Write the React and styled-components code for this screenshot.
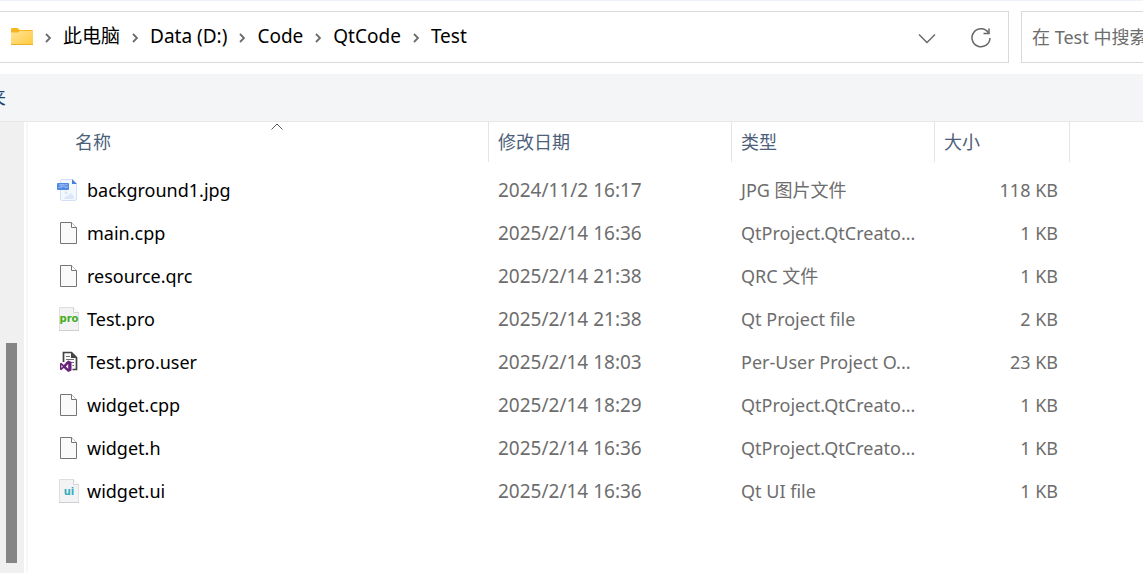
import React from 'react'
import styled, { createGlobalStyle } from 'styled-components'

const crumbs = ['此电脑', 'Data (D:)', 'Code', 'QtCode', 'Test']

const files = [
  { name: 'background1.jpg', date: '2024/11/2 16:17', type: 'JPG 图片文件', size: '118 KB', icon: 'jpg' },
  { name: 'main.cpp', date: '2025/2/14 16:36', type: 'QtProject.QtCreato...', size: '1 KB', icon: 'blank' },
  { name: 'resource.qrc', date: '2025/2/14 21:38', type: 'QRC 文件', size: '1 KB', icon: 'blank' },
  { name: 'Test.pro', date: '2025/2/14 21:38', type: 'Qt Project file', size: '2 KB', icon: 'pro' },
  { name: 'Test.pro.user', date: '2025/2/14 18:03', type: 'Per-User Project O...', size: '23 KB', icon: 'vs' },
  { name: 'widget.cpp', date: '2025/2/14 18:29', type: 'QtProject.QtCreato...', size: '1 KB', icon: 'blank' },
  { name: 'widget.h', date: '2025/2/14 16:36', type: 'QtProject.QtCreato...', size: '1 KB', icon: 'blank' },
  { name: 'widget.ui', date: '2025/2/14 16:36', type: 'Qt UI file', size: '1 KB', icon: 'ui' },
]

const columns = [
  { id: 'name', title: '名称', width: 461 },
  { id: 'date', title: '修改日期', width: 243 },
  { id: 'type', title: '类型', width: 203 },
  { id: 'size', title: '大小', width: 135 },
]

function FolderIcon() {
  return (
    <svg width="22" height="18" viewBox="0 0 22 18" aria-hidden="true">
      <defs>
        <linearGradient id="folder" x1="0" y1="0" x2="1" y2="1">
          <stop offset="0" stopColor="#ffe49a" />
          <stop offset="1" stopColor="#ffca3a" />
        </linearGradient>
      </defs>
      <path d="M0 1.2Q0 0 1.2 0H6.5L8.5 2H21Q22 2 22 3V8H0Z" fill="#f6b51e" />
      <path d="M0 4.6H7L9 3H22V17H0Z" fill="url(#folder)" />
      <path d="M0 16H22V16.5Q22 17 21 17H1Q0 17 0 16.5Z" fill="#eab02c" />
    </svg>
  )
}

function CrumbArrow() {
  return (
    <svg width="6" height="10" viewBox="0 0 6 10" aria-hidden="true">
      <path d="M1 1L5 5L1 9" fill="none" stroke="#6b6b6b" strokeWidth="1.8" />
    </svg>
  )
}

function FileIcon({ kind }) {
  if (kind === 'jpg') {
    return (
      <svg width="24" height="24" viewBox="0 0 24 24" aria-hidden="true">
        <path d="M6 1.5H16L20.5 6V21Q20.5 22.5 19 22.5H6Q4.5 22.5 4.5 21V3Q4.5 1.5 6 1.5Z" fill="#f3f7fe" stroke="#d3e0f8" />
        <path d="M16 1L21 6H16Z" fill="#4a80dc" />
        <circle cx="10" cy="14.5" r="1.5" fill="#dbe6fa" />
        <path d="M8 21Q10 17 12 18Q14 14 16 16Q18 18 18 21Z" fill="#dbe6fa" />
        <rect x="1" y="5" width="12" height="7" rx="1" fill="#5088e4" />
        <text x="7" y="10" textAnchor="middle" fontFamily="Liberation Sans, sans-serif" fontSize="5" fontWeight="700" fill="#a5c2f5">JPG</text>
      </svg>
    )
  }
  if (kind === 'vs') {
    return (
      <svg width="24" height="24" viewBox="0 0 24 24" aria-hidden="true">
        <path d="M7 2.5H15.5L20.5 7.5V19.5H7Z" fill="#fafafa" />
        <path d="M7.5 12V2.5H15.5L20.5 7.5V19.5H16.5" fill="none" stroke="#424242" strokeWidth="1.7" />
        <path d="M15 2.5V8H20.5Z" fill="#424242" />
        <path d="M10 6.5H14M10 9.5H18M10 12.5H18M16.5 15.5H18" stroke="#707070" />
        <path
          d="M12.2 10.5L15.5 12V20.5L12.2 22L7.8 17.9L5.2 20.2L4 19.6V13.4L5.2 12.8L7.8 15L12.2 10.5ZM12.2 14L9.8 16.5L12.2 18.8ZM5.4 15V18L6.8 16.5Z"
          fill="#68217a"
          fillRule="evenodd"
        />
      </svg>
    )
  }
  if (kind === 'pro' || kind === 'ui') {
    const isPro = kind === 'pro'
    return (
      <svg width="24" height="24" viewBox="0 0 24 24" aria-hidden="true">
        <path d="M3.5 .5H17.5L22.5 5.5V23.5H3.5Z" fill="#f3f3f5" stroke="#dedee0" />
        <path d="M17.5 .5V5.5H22.5" fill="#fff" stroke="#d4d4d6" />
        <path d="M3 23.5H23" stroke="#cfcfd1" />
        <text
          x="13"
          y={isPro ? 15 : 16}
          textAnchor="middle"
          fontFamily="DejaVu Sans, sans-serif"
          fontSize="10"
          fontWeight="700"
          fill={isPro ? '#41ad20' : '#32afc2'}
        >
          {kind}
        </text>
      </svg>
    )
  }
  return (
    <svg width="24" height="24" viewBox="0 0 24 24" aria-hidden="true">
      <path d="M4.5 1.5H15.5L20.5 6.5V22.5H4.5Z" fill="#fafafa" stroke="#757575" />
      <path d="M15.5 1.5V6.5H20.5" fill="#fff" stroke="#757575" />
    </svg>
  )
}

function AddressBar() {
  return (
    <TopRow>
      <AddressBox aria-label="Address">
        <FolderIcon />
        {crumbs.map((crumb) => (
          <React.Fragment key={crumb}>
            <ArrowSlot><CrumbArrow /></ArrowSlot>
            <Crumb type="button">{crumb}</Crumb>
          </React.Fragment>
        ))}
        <Actions>
          <IconButton type="button" aria-label="History">
            <svg width="18" height="11" viewBox="0 0 18 11">
              <path d="M1 1.5L9 9.5L17 1.5" fill="none" stroke="#666" strokeWidth="1.4" />
            </svg>
          </IconButton>
          <IconButton type="button" aria-label="Refresh">
            <svg width="22" height="22" viewBox="0 0 22 22">
              <path d="M18.5 5.8A9 9 0 1 0 20 11" fill="none" stroke="#666" strokeWidth="1.5" />
              <path d="M19 1.5V6.5H13.5" fill="none" stroke="#666" strokeWidth="1.5" />
            </svg>
          </IconButton>
        </Actions>
      </AddressBox>
      <SearchInput type="text" aria-label="Search" placeholder="在 Test 中搜索" />
    </TopRow>
  )
}

function FileTable() {
  return (
    <Table>
      <colgroup>
        {columns.map((col) => <Col key={col.id} $width={col.width} />)}
        <col />
      </colgroup>
      <thead>
        <tr>
          {columns.map((col) => (
            <HeadCell key={col.id} $first={col.id === 'name'}>
              <HeadButton type="button">
                {col.id === 'name' && (
                  <SortMark width="12" height="7" viewBox="0 0 12 7" aria-hidden="true">
                    <path d="M.5 6.5L6 1L11.5 6.5" fill="none" stroke="#5c5c5c" />
                  </SortMark>
                )}
                {col.title}
              </HeadButton>
            </HeadCell>
          ))}
          <td />
        </tr>
      </thead>
      <tbody>
        {files.map((file) => (
          <tr key={file.name}>
            <NameCell>
              <FileName>
                <FileIcon kind={file.icon} />
                <span>{file.name}</span>
              </FileName>
            </NameCell>
            <DateCell>{file.date}</DateCell>
            <Cell>{file.type}</Cell>
            <SizeCell>{file.size}</SizeCell>
            <td />
          </tr>
        ))}
      </tbody>
    </Table>
  )
}

function App() {
  return (
    <>
      <GlobalStyle />
      <Page>
        <AddressBar />
        <Toolbar>
          <ToolbarButton type="button">夹</ToolbarButton>
        </Toolbar>
        <Body>
          <ScrollTrack>
            <ScrollThumb />
          </ScrollTrack>
          <Content>
            <FileTable />
          </Content>
        </Body>
      </Page>
    </>
  )
}

const GlobalStyle = createGlobalStyle`
  * {
    box-sizing: border-box;
  }

  body {
    margin: 0;
    background: #fff;
    overflow: hidden;
  }

  body, button, input {
    font-family: "Noto Sans", "Noto Sans CJK SC", sans-serif;
    font-size: 18px;
    font-weight: 400;
    line-height: 24px;
  }

  button {
    padding: 0;
    border: none;
    background: none;
    color: inherit;
    white-space: nowrap;
  }

  svg {
    display: block;
    flex-shrink: 0;
  }
`;

const Page = styled.div`
  display: flex;
  flex-direction: column;
  min-height: 100vh;
  border-top: 1px solid #eef3f9;
`;

const TopRow = styled.div`
  display: flex;
  gap: 12px;
  padding: 10px 0 11px;
`;

const AddressBox = styled.nav`
  flex: 1;
  display: flex;
  align-items: center;
  height: 52px;
  padding-left: 11px;
  border: 1px solid #d9d9d9;
  border-left: none;
`;

const ArrowSlot = styled.span`
  display: flex;
  justify-content: center;
  width: 30px;
  padding-top: 2px;
`;

const Crumb = styled.button`
  padding-bottom: 2px;
  font-size: 19px;
  color: #000;
`;

const Actions = styled.div`
  display: flex;
  align-items: center;
  gap: 34px;
  margin-left: auto;
  padding: 2px 16px 0 0;
`;

const IconButton = styled.button`
  display: flex;
`;

const SearchInput = styled.input`
  width: 122px;
  height: 52px;
  padding: 0 0 0 10px;
  border: 1px solid #d9d9d9;
  border-right: none;
  border-radius: 0;
  outline: none;
  background: #fff;

  &::placeholder {
    color: #6d6d6d;
    opacity: 1;
  }
`;

const Toolbar = styled.div`
  display: flex;
  height: 48px;
  background: #f4f5f7;
  border-bottom: 1px solid #e5e7e9;
`;

const ToolbarButton = styled.button`
  display: flex;
  align-items: center;
  justify-content: flex-end;
  width: 6px;
  padding-bottom: 2px;
  overflow: hidden;
  color: #1d4270;
`;

const Body = styled.div`
  flex: 1;
  display: flex;
`;

const ScrollTrack = styled.div`
  display: flex;
  flex-direction: column;
  justify-content: flex-end;
  width: 24px;
  padding: 0 7px 10px 6px;
  background: #f0f0f0;
`;

const ScrollThumb = styled.div`
  height: 50%;
  background: #858585;
`;

const Content = styled.main`
  flex: 1;
  min-width: 0;
  margin-left: 2px;
  border-left: 2px solid #f7f7f7;
`;

const Table = styled.table`
  width: 100%;
  table-layout: fixed;
  border-collapse: collapse;

  td, th {
    padding: 0;
  }
`;

const Col = styled.col`
  width: ${({ $width }) => $width}px;
`;

const HeadCell = styled.th`
  height: 46px;
  vertical-align: top;

  && {
    padding-left: ${({ $first }) => ($first ? '38px' : '0')};
  }
`;

const HeadButton = styled.button`
  position: relative;
  display: block;
  width: 100%;
  height: 40px;
  padding-left: 9px;
  border-right: 1px solid #e5e5e5;
  text-align: left;
  color: #4c607a;
`;

const SortMark = styled.svg`
  position: absolute;
  top: 1px;
  left: 50%;
  transform: translateX(-50%);
`;

const Cell = styled.td`
  height: 43px;
  color: #6d6d6d;
  white-space: nowrap;

  && {
    padding-left: 9px;
  }
`;

const NameCell = styled(Cell)`
  color: #000;

  && {
    padding-left: 28px;
  }
`;

// digits read a little small next to the names, so dates get one size up
const DateCell = styled(Cell)`
  font-size: 19px;
`;

const SizeCell = styled(Cell)`
  text-align: right;

  && {
    padding-right: 12px;
  }
`;

const FileName = styled.div`
  display: flex;
  align-items: center;
  gap: 7px;
`;

export default App
